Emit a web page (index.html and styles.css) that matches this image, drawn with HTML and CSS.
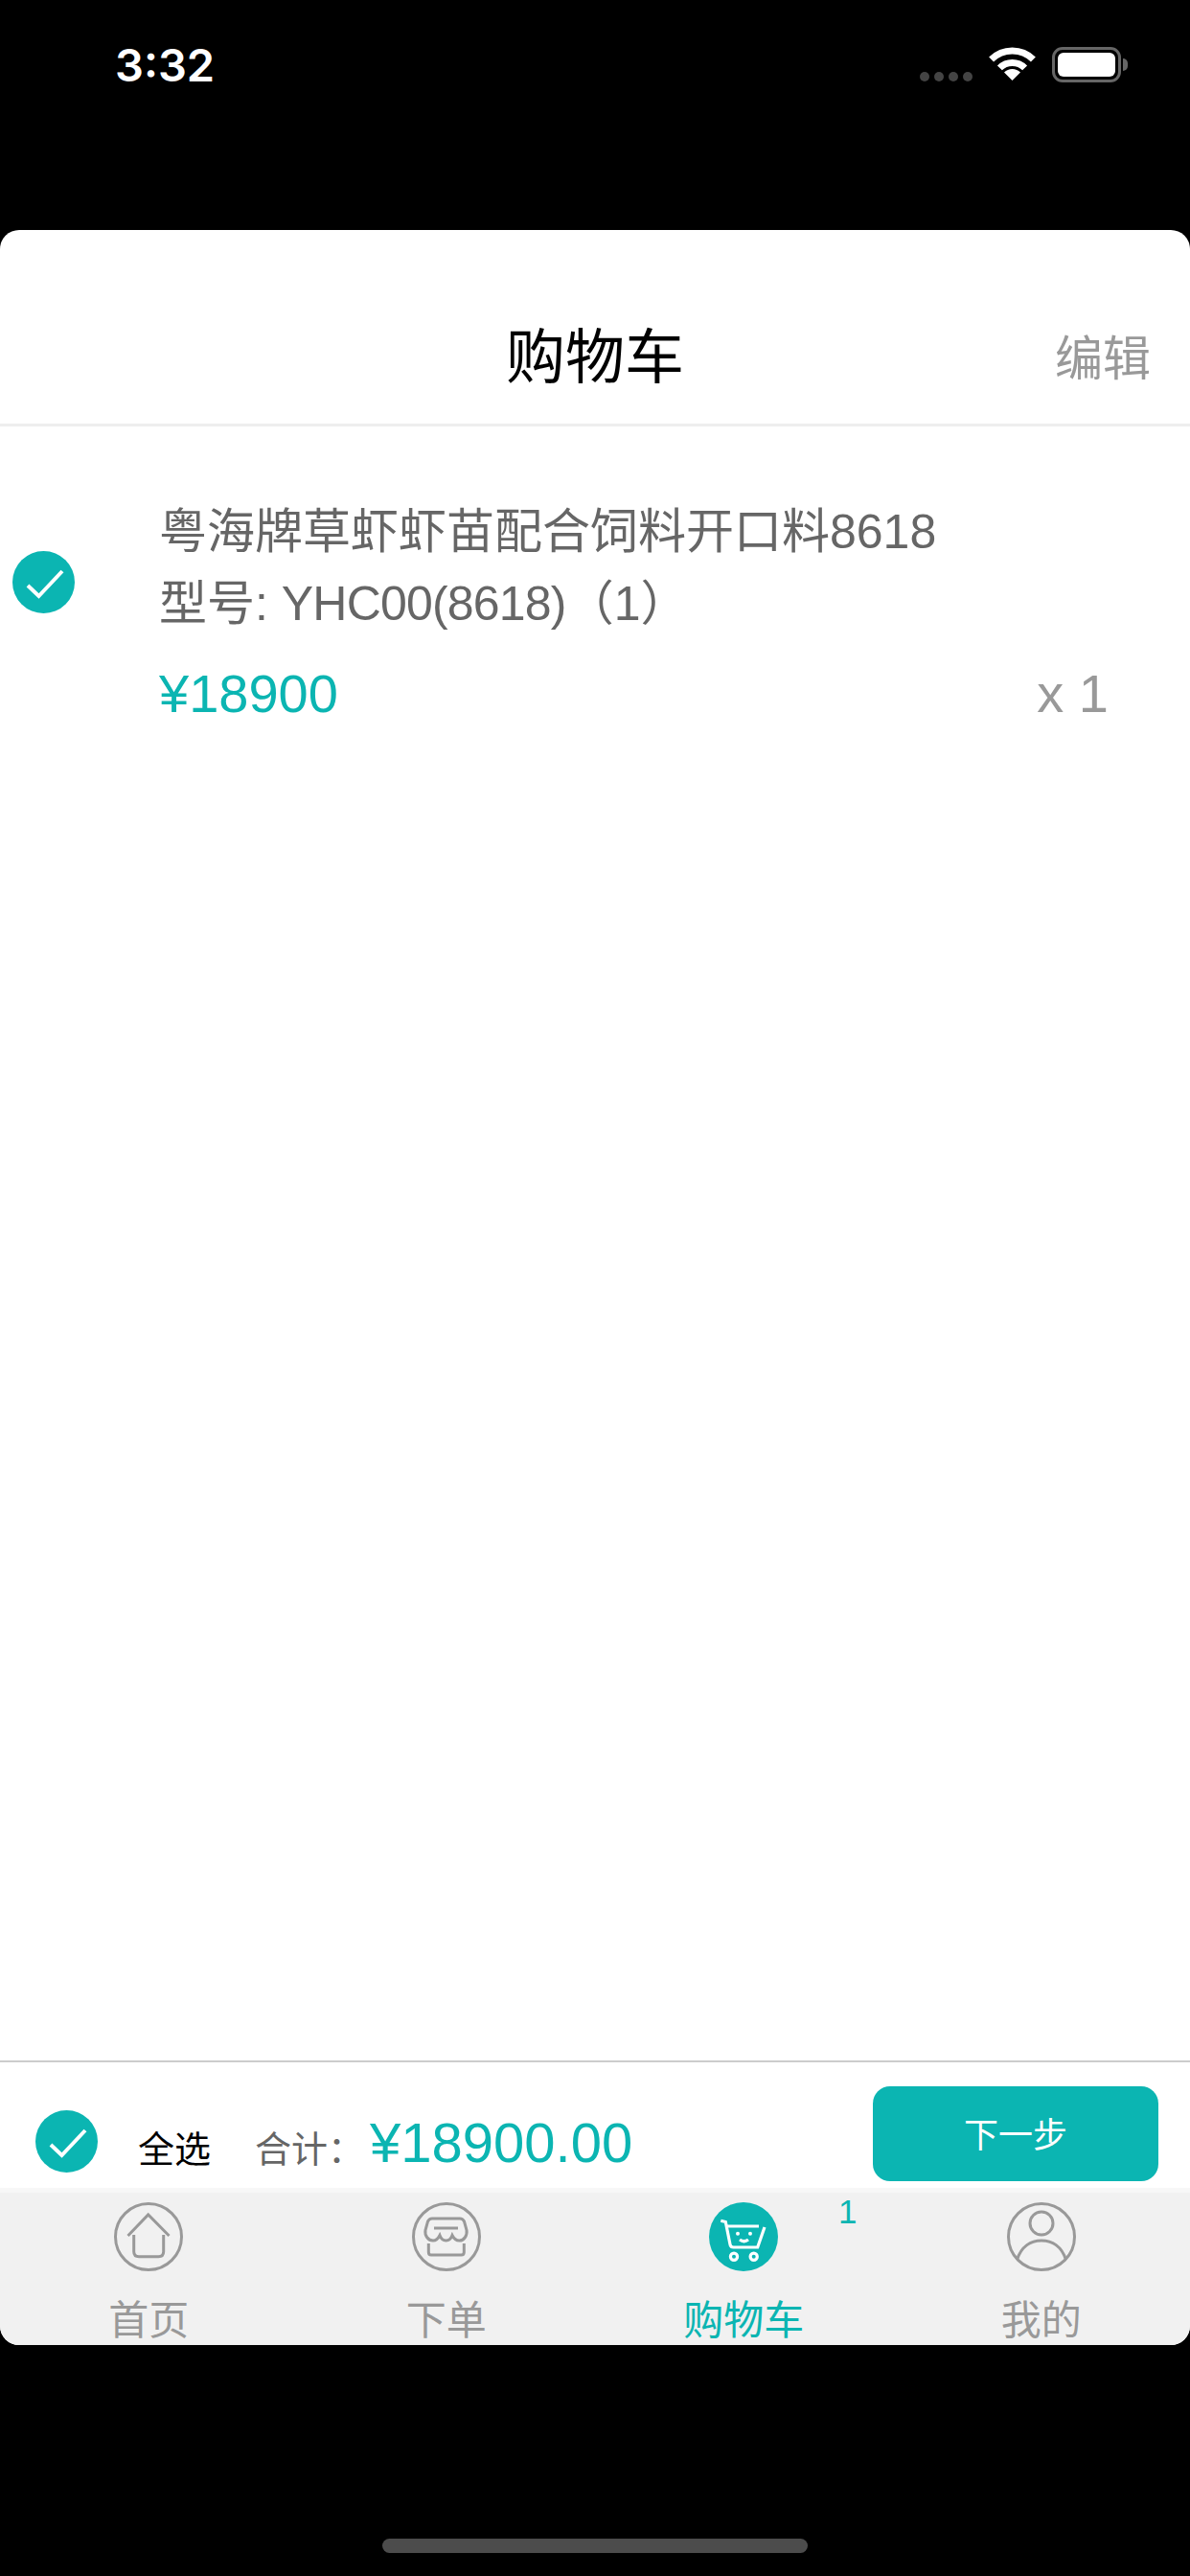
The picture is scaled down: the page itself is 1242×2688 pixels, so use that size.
FILE: index.html
```html
<!DOCTYPE html>
<html lang="zh">
<head>
  <meta charset="UTF-8">
  <title>购物车</title>
  <link rel="stylesheet" href="styles.css">
</head>

<body>

  <div class="status-bar">
    <span class="time">3:32</span>
    <div class="status-icons">
      <div class="signal"><i></i><i></i><i></i><i></i></div>
      <svg class="wifi" width="49" height="35" viewBox="0 0 49 35">
        <path d="M2.6 13.1A31 31 0 0 1 46.4 13.1" fill="none" stroke="#fff" stroke-width="7"/>
        <path d="M11.4 21.9A18.5 18.5 0 0 1 37.6 21.9" fill="none" stroke="#fff" stroke-width="7"/>
        <path d="M24.5 35L16 26.5A12 12 0 0 1 33 26.5Z" fill="#fff"/>
      </svg>
      <div class="battery"><div class="battery-level"></div></div>
      <div class="battery-cap"></div>
    </div>
  </div>

  <div class="card">
    <div class="header">
      <h1>购物车</h1>
      <a class="edit">编辑</a>
    </div>

    <div class="cart-list">
      <div class="item">
        <svg class="check item-check" viewBox="0 0 65 65">
          <circle cx="32.5" cy="32.5" r="32.5" fill="#0bb5b2"/>
          <path d="M16 36L27.5 47L52 21" fill="none" stroke="#fff" stroke-width="4"/>
        </svg>
        <div class="item-info">
          <div class="item-name">粤海牌草虾虾苗配合饲料开口料8618</div>
          <div class="item-name">型号: <span class="item-code">YHC00(8618)</span>（1）</div>
          <div class="item-bottom">
            <span class="price">¥18900</span>
            <span class="qty">x 1</span>
          </div>
        </div>
      </div>
    </div>

    <div class="footer">
      <svg class="check" viewBox="0 0 65 65">
        <circle cx="32.5" cy="32.5" r="32.5" fill="#0bb5b2"/>
        <path d="M16 36L27.5 47L52 21" fill="none" stroke="#fff" stroke-width="4"/>
      </svg>
      <div class="summary">
        <span class="select-all">全选</span>
        <span class="total-label">合计：</span>
        <span class="total">¥18900.00</span>
      </div>
      <button class="next">下一步</button>
    </div>

    <div class="tabs">
      <div class="tab">
        <svg class="tab-icon" viewBox="0 0 72 72" fill="none" stroke="#999" stroke-width="3">
          <circle cx="36" cy="36" r="34.5"/>
          <path d="M14.5 35L35.7 13L57.5 35"/>
          <path d="M20.7 34V51.5Q20.7 56.7 26 56.7H46.5Q51.7 56.7 51.7 51.5V34"/>
        </svg>
        <span class="tab-label">首页</span>
      </div>
      <div class="tab">
        <svg class="tab-icon" viewBox="0 0 72 72" fill="none" stroke="#999" stroke-width="3">
          <circle cx="36" cy="36" r="34.5"/>
          <path d="M21 17H50C52.5 17 53.5 18 54.5 20L57 29C58 35 54 40 49.5 40C46.5 40 44 38.5 42 34.5C40.500 38.5 38.500 40 35.500 40C32.500 40 30.500 38.5 29 34.5C27 38.5 25 40 22 40C17 40 13 35 14 29L16.5 20C17.5 18 18.5 17 21 17Z"/>
          <path d="M23 27H48"/>
          <path d="M17.3 43V52Q17.3 55 20 55H51.5Q54.3 55 54.3 52V43"/>
        </svg>
        <span class="tab-label">下单</span>
      </div>
      <div class="tab tab-active">
        <svg class="tab-icon" viewBox="0 0 72 72" fill="none" stroke="#fff" stroke-width="3.2">
          <circle cx="36" cy="36" r="36" fill="#0bb5b2" stroke="none"/>
          <path d="M12.3 19.3L17.3 20.5L22 44Q22.5 47 25.5 47H50.7L58 26"/>
          <path d="M18 25H52"/>
          <circle cx="26" cy="56.7" r="3.6"/>
          <circle cx="46.7" cy="56.7" r="3.6"/>
          <circle cx="30" cy="32.7" r="2" fill="#fff" stroke="none"/>
          <circle cx="43" cy="32.7" r="2" fill="#fff" stroke="none"/>
          <path d="M32 39Q36.5 42.5 41 39"/>
        </svg>
        <span class="tab-label">购物车</span>
        <span class="badge">1</span>
      </div>
      <div class="tab">
        <svg class="tab-icon" viewBox="0 0 72 72" fill="none" stroke="#999" stroke-width="3">
          <circle cx="36" cy="36" r="34.5"/>
          <circle cx="36" cy="22" r="12"/>
          <path d="M10.5 60C15 46 25 40 36 40C47 40 57 46 61.5 60"/>
        </svg>
        <span class="tab-label">我的</span>
      </div>
    </div>
  </div>

  <div class="home-area">
    <div class="home-indicator"></div>
  </div>

</body>
</html>
```

FILE: styles.css
```css
:root {
  --teal: #0bb5b2;
  --grey-text: #666;
  --light-text: #999;
}

body {
  margin: 0;
  height: 2688px;
  background-color: #000;
  font-family: 'Liberation Sans', 'Noto Sans CJK SC', sans-serif;
  display: flex;
  flex-direction: column;
  overflow: hidden;
}

/* Status bar */
.status-bar {
  height: 240px;
  flex-shrink: 0;
  box-sizing: border-box;
  padding: 44px 65px 0 120px;
  display: flex;
  justify-content: space-between;
  align-items: flex-start;
  color: #fff;
}

.time {
  font-family: Inter, 'Liberation Sans', sans-serif;
  font-size: 47px;
  font-weight: 600;
  line-height: 48px;
}

.status-icons {
  display: flex;
  align-items: flex-start;
  padding-top: 5px;
}

.signal {
  display: flex;
  gap: 5px;
  margin: 26px 17px 0 0;
}

.signal i {
  width: 10px;
  height: 10px;
  border-radius: 50%;
  background: #444;
}

.battery {
  width: 72px;
  height: 37px;
  box-sizing: border-box;
  border: 3px solid #666;
  border-radius: 11px;
  padding: 3px;
  margin-left: 17px;
}

.battery-level {
  height: 100%;
  background: #fff;
  border-radius: 6px;
}

.battery-cap {
  width: 5px;
  height: 13px;
  margin: 12px 0 0 2px;
  background: #666;
  border-radius: 0 6px 6px 0;
}

/* Card */
.card {
  flex: 1;
  background: #fff;
  border-radius: 20px;
  overflow: hidden;
  display: flex;
  flex-direction: column;
}

.header {
  height: 205px;
  flex-shrink: 0;
  box-sizing: border-box;
  border-bottom: 3px solid #eee;
  padding: 104px 41px 0 0;
  display: flex;
  justify-content: flex-end;
  position: relative;
}

h1 {
  position: absolute;
  left: 0;
  right: 0;
  top: 96px;
  margin: 0;
  font-size: 62px;
  font-weight: 400;
  line-height: 76px;
  text-align: center;
  color: #000;
}

.edit {
  font-size: 50px;
  line-height: 62px;
  color: var(--light-text);
}

.cart-list {
  flex: 1;
}

.item {
  display: flex;
  padding: 73px 85px 0 13px;
}

.check {
  width: 65px;
  height: 65px;
  flex-shrink: 0;
}

.item-check {
  margin: 57px 88px 0 0;
}

.item-info {
  flex: 1;
}

.item-name {
  font-size: 50px;
  line-height: 75px;
  color: var(--grey-text);
}

.item-code {
  letter-spacing: -0.8px;
}

.item-bottom {
  margin-top: 18px;
  display: flex;
  justify-content: space-between;
  font-size: 56px;
  line-height: 75px;
}

.price {
  color: var(--teal);
}

.qty {
  color: var(--light-text);
}

/* Bottom summary */
.footer {
  height: 138px;
  flex-shrink: 0;
  box-sizing: border-box;
  border-top: 2px solid #ccc;
  border-bottom: 5px solid #f7f7f7;
  padding: 25px 33px 0 37px;
  display: flex;
  align-items: flex-start;
}

.footer .check {
  margin-top: 25px;
}

.summary {
  flex: 1;
  display: flex;
  align-items: baseline;
  margin: 26px 0 0 42px;
  line-height: 66px;
}

.select-all {
  font-size: 38px;
  color: #000;
  margin-right: 46px;
}

.total-label {
  font-size: 38px;
  color: var(--grey-text);
  margin-right: 6px;
}

.total {
  font-size: 58px;
  color: var(--teal);
}

.next {
  width: 298px;
  height: 99px;
  border: none;
  border-radius: 18px;
  background: var(--teal);
  color: #fff;
  font-family: inherit;
  font-size: 36px;
  padding: 0 0 4px;
}

/* Tab bar */
.tabs {
  height: 159px;
  flex-shrink: 0;
  background: #f1f1f1;
  display: grid;
  grid-template-columns: repeat(4, 1fr);
}

.tab {
  position: relative;
  display: flex;
  flex-direction: column;
  align-items: center;
  padding-top: 10px;
  color: var(--light-text);
}

.tab-icon {
  width: 72px;
  height: 72px;
}

.tab-label {
  margin-top: 27px;
  font-size: 42px;
  line-height: 50px;
}

.tab-active {
  color: var(--teal);
}

.badge {
  position: absolute;
  left: 254px;
  top: 0;
  font-size: 35px;
  line-height: 40px;
  color: var(--teal);
}

/* Home indicator */
.home-area {
  height: 241px;
  flex-shrink: 0;
  display: flex;
  justify-content: center;
}

.home-indicator {
  width: 444px;
  height: 15px;
  margin-top: 202px;
  border-radius: 8px;
  background: #4c4c4c;
}
```
